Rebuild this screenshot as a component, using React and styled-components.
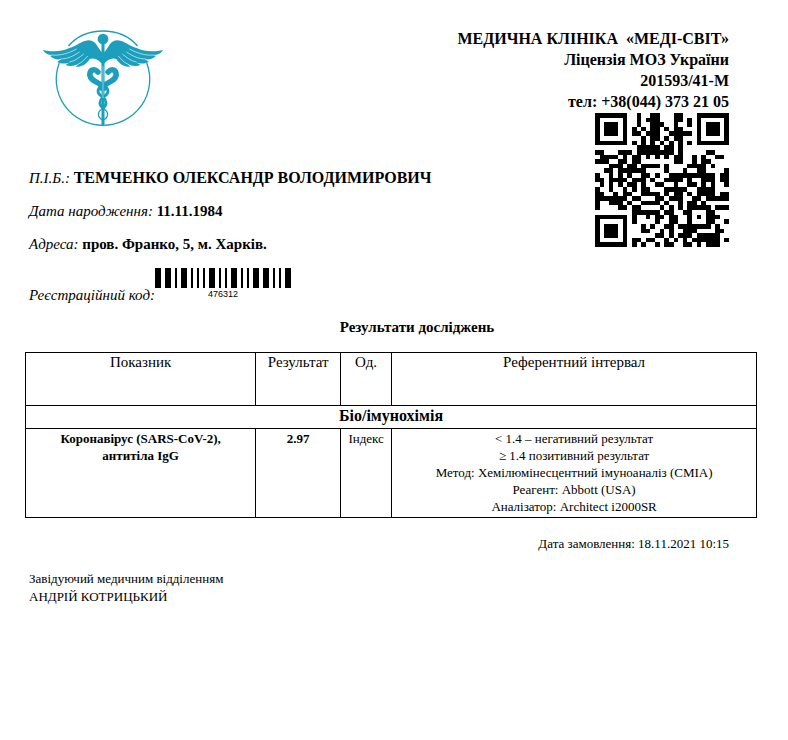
import React from "react";
import styled, { createGlobalStyle } from "styled-components";

const Global = createGlobalStyle`
  * { box-sizing: border-box; }
  body { margin: 0; background: #fff; color: #000; font-family: "Liberation Serif", "Times New Roman", serif; }
`;

const Page = styled.main`
  padding: 28px 31px 40px 25px;
`;
const Header = styled.header`
  display: flex;
  justify-content: space-between;
  align-items: flex-start;
  padding: 0 28px 0 4px;
`;
const Intro = styled.div`
  display: flex;
  flex-direction: column;
`;
const Logo = styled.svg`
  display: block;
  width: 122px;
  height: 99px;
  margin: 0 0 40px 13px;
`;
const Clinic = styled.address`
  display: flex;
  flex-direction: column;
  align-items: flex-end;
  font-style: normal;
  font-weight: bold;
  font-size: 16px;
  line-height: 21px;
  white-space: pre;
`;
const QrCode = styled.svg`
  display: block;
  width: 134px;
  height: 134px;
  margin-top: 1px;
`;
const Field = styled.p`
  margin: 0;
  height: 33px;
  font-size: 15px;
  line-height: 22px;
  white-space: nowrap;
`;
const Value = styled.strong`
  font-size: ${(p) => (p.$large ? "16px" : "15px")};
`;
const CodeRow = styled.div`
  display: flex;
  align-items: flex-end;
  padding-top: 2px;
  font-size: 15px;
  line-height: 22px;
`;
const Barcode = styled.figure`
  display: flex;
  flex-direction: column;
  align-items: center;
  margin: 0 0 6px;
`;
const Bars = styled.svg`
  display: block;
  width: 136px;
  height: 20px;
`;
const BarcodeText = styled.figcaption`
  font: 9px/12px "Liberation Sans", Arial, sans-serif;
`;
const Title = styled.h1`
  margin: 10px 0 14px;
  padding-left: 52px;
  text-align: center;
  font-size: 15px;
  line-height: 22px;
`;
const Table = styled.table`
  width: 100%;
  table-layout: fixed;
  border-collapse: collapse;
  text-align: center;
`;
const Column = styled.col`
  width: ${(p) => p.$width};
`;
const HeadCell = styled.th`
  height: 53px;
  padding: 0;
  border: 1px solid #000;
  vertical-align: top;
  font-weight: normal;
  font-size: 15px;
  line-height: 18px;
`;
const GroupCell = styled.th`
  padding: 0 0 2px;
  border: 1px solid #000;
  font-size: 16px;
  line-height: 20px;
`;
const Cell = styled.td`
  padding: 1px 0 2px;
  border: 1px solid #000;
  vertical-align: top;
  font-weight: ${(p) => (p.$bold ? "bold" : "normal")};
  font-size: 13px;
  line-height: 17px;
`;
const Ordered = styled.p`
  margin: 17px 28px 17px 0;
  text-align: right;
  font-size: 13px;
  line-height: 18px;
`;
const Signature = styled.footer`
  padding-left: 4px;
  font-size: 13px;
  line-height: 18px;
`;

const QR_ROWS = [
  "#######..#..##...##...#######",
  "#.....#..#.###...##.#.#.....#",
  "#.###.#..#..###..#..#.#.###.#",
  "#.###.#.#.#.##.#.##...#.###.#",
  "#.###.#.##.###..#####.#.###.#",
  "#.....#...#.##.#.##...#.....#",
  "#######.#.#.#.#.#.#.#.#######",
  ".........#####.##.#..........",
  "##...###.########.#.....##...",
  ".####.#.##.#.#.#.##..#.#..##.",
  "###..##.##.......##..#.##....",
  "...###.##.####.#....####.#...",
  "..##.######....#...#..##....#",
  "#..#.#.#..##.#..##########.##",
  "##.####.###.#..####.#..###.##",
  ".#.#.#.##.#..##..#..##.#.#..#",
  "#..#..#.#.##...#####..####...",
  "##..#.##..####.#.##.#.####.##",
  "#######.##...##.###..##.#####",
  "#..###.#..####.#..#.##.#.....",
  "#....##.##....#.#.#.#####.###",
  "........######.##..##...##...",
  "#######.#..#.##.##..#.#.###..",
  "#.....#.#....#..##..#...##..#",
  "#.###.#...#.#..##.#######.#..",
  "#.###.#...##..#.#..###....##.",
  "#.###.#......##.#.###.#####..",
  "#.....#.##.##..#.#.#.######.#",
  "#######.#.#..#.##..##.#.###..",
];
const BARS = [6, 4, 6, 4, 2, 4, 6, 4, 2, 4, 2, 4, 2, 4, 6, 4, 2, 4, 2, 4, 6, 4, 2, 4, 2, 4, 6, 4, 6, 4, 2, 4, 2, 4, 6];

function Qr() {
  const d = QR_ROWS.flatMap((row, y) =>
    [...row].map((c, x) => (c === "#" ? `M${x} ${y}h1v1h-1z` : ""))
  ).join("");
  return (
    <QrCode viewBox="0 0 29 29" role="img" aria-label="QR" shapeRendering="crispEdges">
      <path d={d} />
    </QrCode>
  );
}

function BarcodeBars() {
  let x = 0;
  const d = BARS.map((w, i) => {
    const part = i % 2 === 0 ? `M${x} 0h${w}v20h-${w}z` : "";
    x += w;
    return part;
  }).join("");
  return (
    <Bars viewBox={`0 0 ${x} 20`} preserveAspectRatio="none" aria-hidden="true" shapeRendering="crispEdges">
      <path d={d} />
    </Bars>
  );
}

function Wing() {
  return (
    <g>
      <path
        fill="#1b9fbc"
        d="M60 25C58 24 57 22 55 19C52 13 48 11 42 13C36 15 34 18 27 20C19 24 9 24 1 22C3 26 7 27 10 27L8 28C11 31 15 32 19 31L15 34C19 36 24 36 28 34L23 37C28 39 33 38 37 35L33 39C39 39 44 36 47 31C52 29 57 33 60 37Z"
      />
      <path
        fill="none"
        stroke="#fff"
        strokeWidth="0.6"
        d="M9 27C18 28 27 25 34 21M18 31C25 31 31 28 37 24M27 34C33 33 37 29 41 26M36 36C40 34 42 31 45 28"
      />
    </g>
  );
}

function ClinicLogo() {
  return (
    <Logo viewBox="0 0 120 99" preserveAspectRatio="none" role="img" aria-label="МЕДІ-СВІТ">
      <path fill="none" stroke="#1b9fbc" strokeWidth="1.3" d="M26 18C43 -2 77 -2 94 18M17 35A46 46 0 1 0 103 35" />
      <Wing />
      <g transform="translate(120 0) scale(-1 1)">
        <Wing />
      </g>
      <circle cx="60" cy="11" r="5.3" fill="#1b9fbc" />
      <g fill="none" stroke="#1b9fbc">
        <path strokeWidth="3" d="M60 14V97" />
        <path
          strokeWidth="5.5"
          strokeLinecap="round"
          d="M55 44C51 40 47 42 47 47C48 54 57 54 62 60M65 44C69 40 73 42 73 47C72 54 63 54 58 60"
        />
        <path
          strokeWidth="2.8"
          d="M60 57C53 61 54 66 60 69C66 66 67 61 60 57ZM60 69C56 73 56 77 60 80C64 77 64 73 60 69Z"
        />
        <path strokeWidth="1.3" d="M60 80C54 84 54 89 60 92C66 89 66 84 60 80Z" />
      </g>
      <path stroke="#fff" strokeWidth="0.5" d="M60 38V70" />
    </Logo>
  );
}

export default function App() {
  return (
    <>
      <Global />
      <Page>
        <Header>
          <Intro>
            <ClinicLogo />
            <Field><em>П.І.Б.:</em> <Value $large>ТЕМЧЕНКО ОЛЕКСАНДР ВОЛОДИМИРОВИЧ</Value></Field>
            <Field><em>Дата народження:</em> <Value>11.11.1984</Value></Field>
            <Field><em>Адреса:</em> <Value>пров. Франко, 5, м. Харків.</Value></Field>
            <CodeRow>
              <em>Реєстраційний код:</em>
              <Barcode>
                <BarcodeBars />
                <BarcodeText>476312</BarcodeText>
              </Barcode>
            </CodeRow>
          </Intro>
          <Clinic>
            <span>МЕДИЧНА КЛІНІКА  «МЕДІ-СВІТ»</span>
            <span>Ліцензія МОЗ України</span>
            <span>201593/41-М</span>
            <span>тел: +38(044) 373 21 05</span>
            <Qr />
          </Clinic>
        </Header>
        <Title>Результати досліджень</Title>
        <Table>
          <colgroup>
            <Column $width="31.5%" />
            <Column $width="11.6%" />
            <Column $width="7%" />
            <Column $width="49.9%" />
          </colgroup>
          <thead>
            <tr>
              <HeadCell scope="col">Показник</HeadCell>
              <HeadCell scope="col">Результат</HeadCell>
              <HeadCell scope="col">Од.</HeadCell>
              <HeadCell scope="col">Референтний інтервал</HeadCell>
            </tr>
          </thead>
          <tbody>
            <tr>
              <GroupCell colSpan={4} scope="colgroup">Біо/імунохімія</GroupCell>
            </tr>
            <tr>
              <Cell $bold>Коронавірус (SARS-CoV-2),<br />антитіла IgG</Cell>
              <Cell $bold>2.97</Cell>
              <Cell>Індекс</Cell>
              <Cell>
                &lt; 1.4 – негативний результат<br />
                ≥ 1.4 позитивний результат<br />
                Метод: Хемілюмінесцентний імуноаналіз (CMIA)<br />
                Реагент: Abbott (USA)<br />
                Аналізатор: Architect i2000SR
              </Cell>
            </tr>
          </tbody>
        </Table>
        <Ordered>Дата замовлення: 18.11.2021 10:15</Ordered>
        <Signature>
          Завідуючий медичним відділенням<br />
          АНДРІЙ КОТРИЦЬКИЙ
        </Signature>
      </Page>
    </>
  );
}
